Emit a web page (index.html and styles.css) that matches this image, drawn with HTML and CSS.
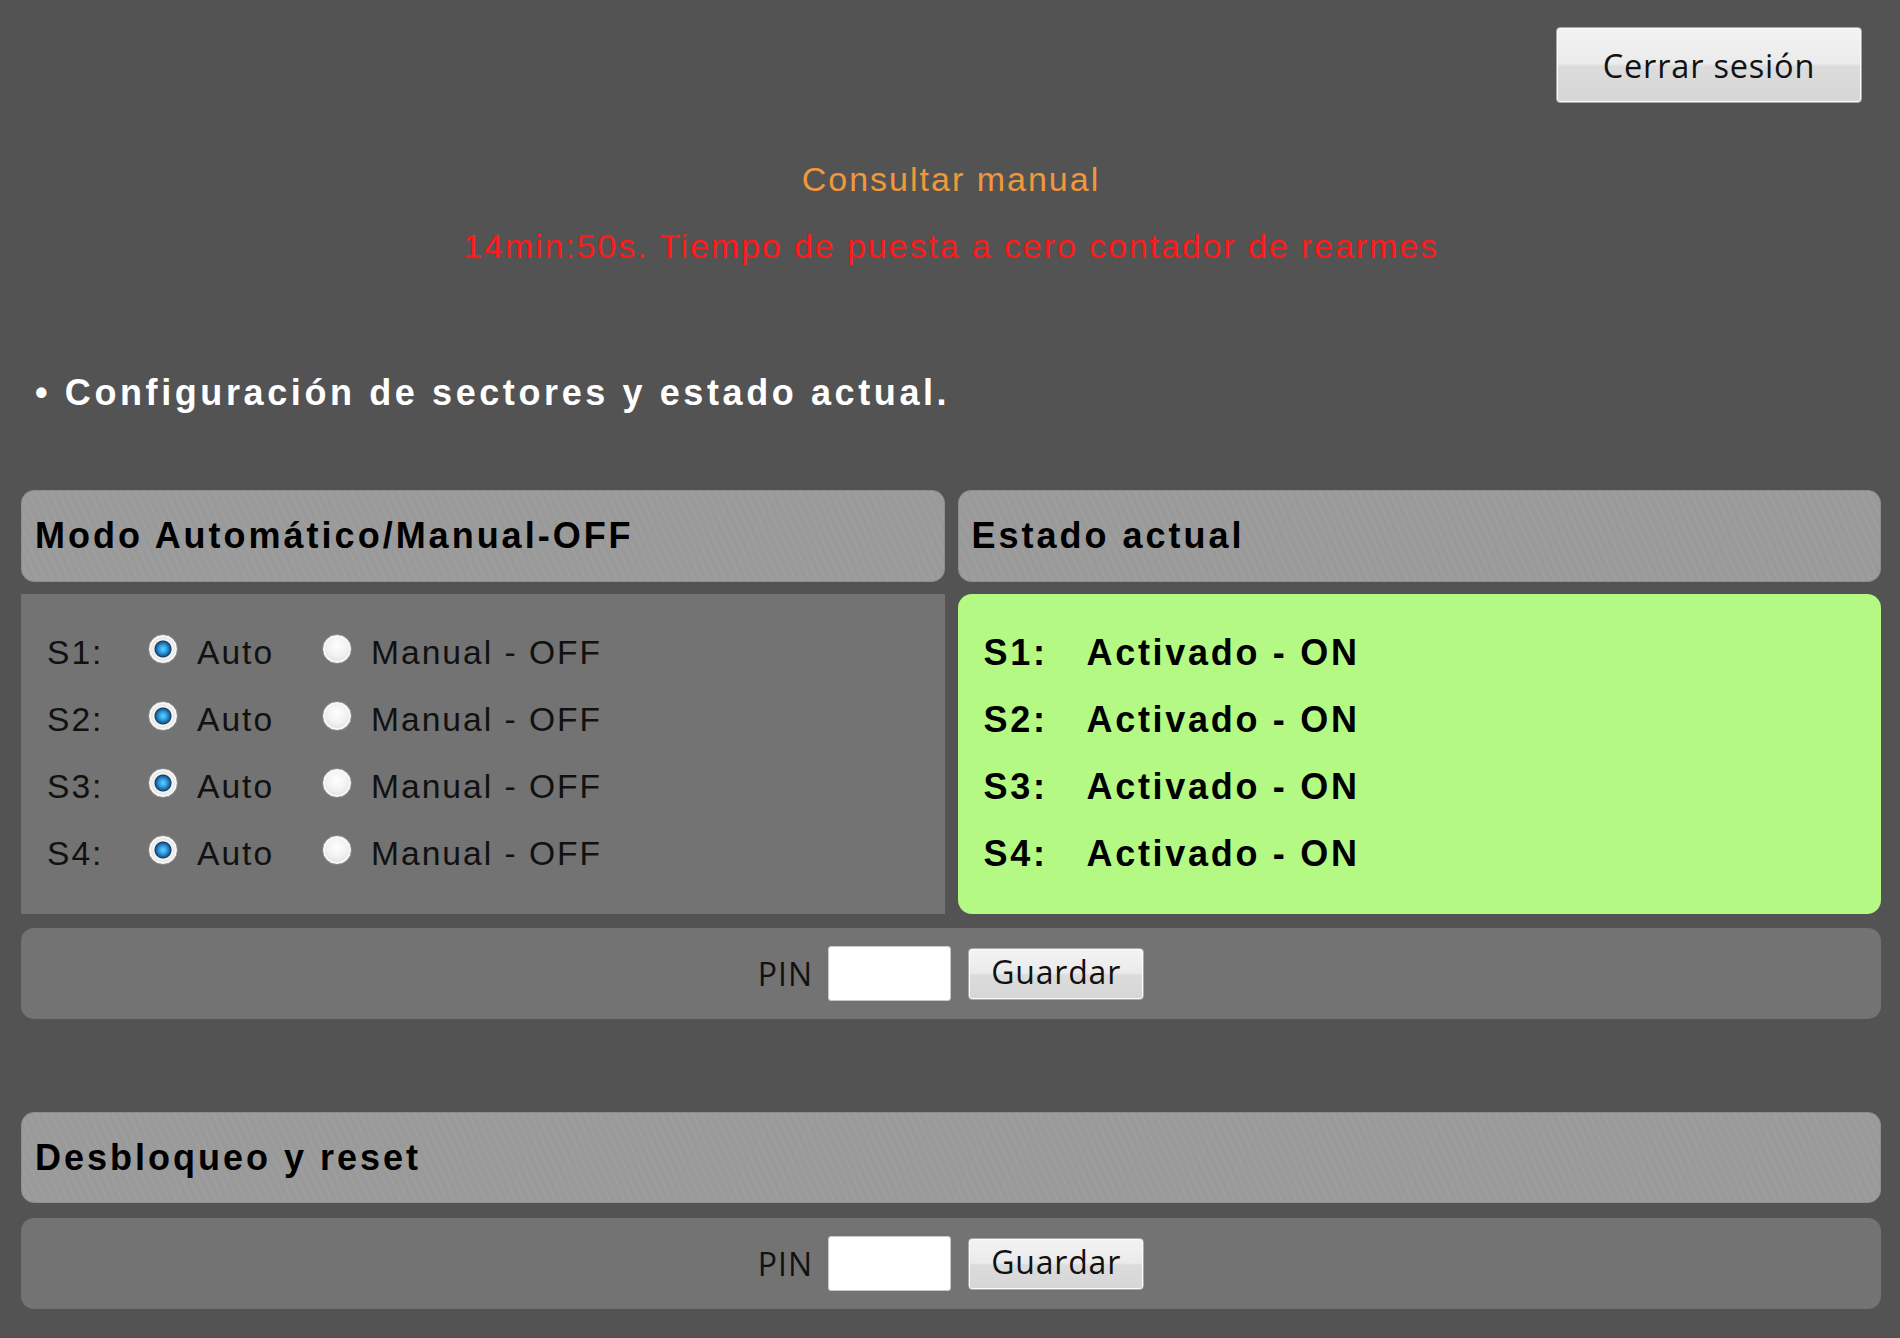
FILE: index.html
```html
<!DOCTYPE html>
<html lang="es">
<head>
    <meta charset="UTF-8">
    <title>Configuración de sectores</title>
    <link rel="stylesheet" href="styles.css">
</head>
<body>
    <div class="page">
        <div class="topbar">
            <button class="btn btn-logout">Cerrar sesión</button>
        </div>

        <div class="manual">Consultar manual</div>
        <div class="timer">14min:50s. Tiempo de puesta a cero contador de rearmes</div>

        <h2 class="section-title">• Configuración de sectores y estado actual.</h2>

        <div class="sectors">
            <div class="panel-head">Modo Automático/Manual-OFF</div>
            <div class="panel-head">Estado actual</div>

            <div class="modes">
                <div class="mode-row">
                    <span class="lbl">S1:</span>
                    <input type="radio" class="radio" name="s1" checked><span class="opt">Auto</span>
                    <input type="radio" class="radio" name="s1"><span class="opt-off">Manual - OFF</span>
                </div>
                <div class="mode-row">
                    <span class="lbl">S2:</span>
                    <input type="radio" class="radio" name="s2" checked><span class="opt">Auto</span>
                    <input type="radio" class="radio" name="s2"><span class="opt-off">Manual - OFF</span>
                </div>
                <div class="mode-row">
                    <span class="lbl">S3:</span>
                    <input type="radio" class="radio" name="s3" checked><span class="opt">Auto</span>
                    <input type="radio" class="radio" name="s3"><span class="opt-off">Manual - OFF</span>
                </div>
                <div class="mode-row">
                    <span class="lbl">S4:</span>
                    <input type="radio" class="radio" name="s4" checked><span class="opt">Auto</span>
                    <input type="radio" class="radio" name="s4"><span class="opt-off">Manual - OFF</span>
                </div>
            </div>

            <div class="status">
                <div class="status-row"><span class="lbl">S1:</span>Activado - ON</div>
                <div class="status-row"><span class="lbl">S2:</span>Activado - ON</div>
                <div class="status-row"><span class="lbl">S3:</span>Activado - ON</div>
                <div class="status-row"><span class="lbl">S4:</span>Activado - ON</div>
            </div>
        </div>

        <form class="pin-row">
            <label>PIN</label>
            <input type="password" class="pin">
            <button type="button" class="btn btn-save">Guardar</button>
        </form>

        <div class="panel-head reset-head">Desbloqueo y reset</div>

        <form class="pin-row pin-row-reset">
            <label>PIN</label>
            <input type="password" class="pin">
            <button type="button" class="btn btn-save">Guardar</button>
        </form>
    </div>
</body>
</html>
```

FILE: styles.css
```css
body {
    margin: 0;
    background: #535353;
    font-family: "Liberation Sans", Arial, sans-serif;
    color: #000;
}
.page {
    padding: 0 19px 0 21px;
}
.topbar {
    display: flex;
    justify-content: flex-end;
    padding: 27px 19px 0 0;
}
.btn {
    font-family: "Open Sans", "Noto Sans", sans-serif;
    letter-spacing: 0.8px;
    color: #111;
    border: 1px solid #a8a8a8;
    border-radius: 4px;
    background: linear-gradient(#f3f3f3 0%, #ebebeb 48%, #dcdcdc 52%, #d6d6d6 100%);
    box-shadow: inset 0 0 0 1px #fbfbfb;
    cursor: pointer;
    padding: 0;
}
.btn-logout {
    width: 306px;
    height: 76px;
    font-size: 32.5px;
}
.manual {
    margin-top: 56px;
    text-align: center;
    color: #f0983a;
    font-size: 34px;
    letter-spacing: 2px;
    line-height: 40px;
}
.timer {
    margin-top: 27px;
    text-align: center;
    color: #ff1a1a;
    font-size: 34px;
    letter-spacing: 1.9px;
    line-height: 40px;
}
.section-title {
    margin: 107px 0 0 14px;
    color: #fff;
    font-size: 36px;
    letter-spacing: 3.6px;
    line-height: 40px;
}
.sectors {
    margin-top: 77px;
    display: grid;
    grid-template-columns: 1fr 1fr;
    column-gap: 13px;
    row-gap: 12px;
}
.panel-head {
    height: 92px;
    box-sizing: border-box;
    display: flex;
    align-items: center;
    padding-left: 13px;
    background: #9a9a9a repeating-linear-gradient(65deg, rgba(255,255,255,0.035) 0 2px, transparent 2px 7px);
    border: 1px solid #8e8e8e;
    border-radius: 13px;
    font-size: 36px;
    font-weight: bold;
    letter-spacing: 3px;
}
.modes, .status {
    height: 320px;
    box-sizing: border-box;
    padding: 25px 0 0 26px;
}
.modes {
    background: #737373;
}
.status {
    background: #b5f985;
    border-radius: 14px;
    font-weight: bold;
    font-size: 36px;
    letter-spacing: 2.7px;
}
.mode-row, .status-row {
    height: 67px;
    display: flex;
    align-items: center;
}
.mode-row {
    font-size: 33.6px;
    letter-spacing: 2px;
    color: #111;
}
.mode-row .lbl {
    width: 101px;
}
.status-row .lbl {
    width: 103px;
}
.radio {
    appearance: none;
    -webkit-appearance: none;
    width: 30px;
    height: 30px;
    margin: -8px 19px 0 0;
    border-radius: 50%;
    border: 1px solid #8a8a8a;
    background: radial-gradient(circle at 50% 40%, #ffffff 0, #f2f2f2 45%, #d2d2d2 100%);
    box-shadow: inset 0 0 0 2px #f8f8f8;
}
.radio:checked {
    background: radial-gradient(circle at 50% 50%, #63d2ff 0, #2d9de2 4px, #1b5d93 7px, #143b60 8px, #f6f6f6 9px, #e4e4e4 12px, #cfcfcf 15px);
}
.opt {
    width: 125px;
}
.pin-row {
    margin-top: 14px;
    height: 91px;
    display: flex;
    align-items: center;
    justify-content: center;
    background: #737373;
    border-radius: 13px;
    font-family: "Open Sans", "Noto Sans", sans-serif;
    font-size: 32px;
    letter-spacing: 1px;
    color: #111;
}
.pin-row label {
    margin-right: 15px;
}
.pin {
    width: 123px;
    height: 55px;
    box-sizing: border-box;
    border: 1px solid #c8c8c8;
    border-radius: 3px;
    background: #fff;
    margin: 0 17px 0 0;
}
.btn-save {
    width: 176px;
    height: 52px;
    font-size: 32px;
    line-height: 1;
    padding-bottom: 4px;
}
.reset-head {
    margin-top: 93px;
    height: 91px;
}
.pin-row-reset {
    margin-top: 15px;
}
```
